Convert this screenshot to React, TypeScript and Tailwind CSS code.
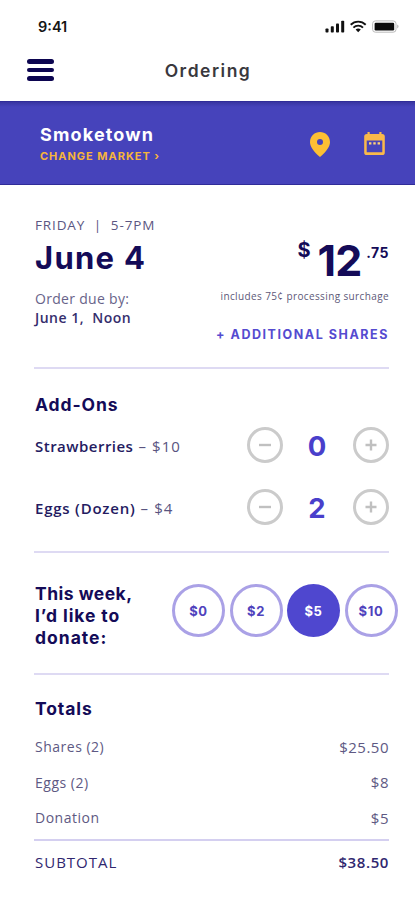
import React from "react";

const addOns = [
  { name: "Strawberries", price: "$10", count: 0, nameClass: "tracking-[0.48px]" },
  { name: "Eggs (Dozen)", price: "$4", count: 2, nameClass: "tracking-[0.78px]" },
];

const donations = ["$0", "$2", "$5", "$10"];

const totals = [
  { label: "Shares (2)", value: "$25.50" },
  { label: "Eggs (2)", value: "$8" },
  { label: "Donation", value: "$5" },
];

const StatusBar = () => (
  <div className="flex h-[54px] items-center justify-between pl-[38px] pr-[15px]">
    <span className="text-[14.5px] leading-none font-semibold text-[#151515]">9:41</span>
    <svg width="75" height="14" viewBox="0 0 75 14" fill="none">
      <g fill="#111">
        <rect x="0.5" y="8.5" width="3" height="4" rx="0.8" />
        <rect x="5.8" y="6.3" width="3" height="6.2" rx="0.8" />
        <rect x="11" y="3.5" width="3" height="9" rx="0.8" />
        <rect x="16.2" y="0.8" width="3" height="11.7" rx="0.8" />
      </g>
      <g stroke="#111" strokeWidth="1.9">
        <path d="M25.7 4.7c4.2-4.1 10.8-4.1 15 0" />
        <path d="M28.4 7.6c2.7-2.6 6.9-2.6 9.6 0" />
      </g>
      <path d="M30.6 9.6c1.6-1.4 3.6-1.4 5.2 0l-2.6 2.7z" fill="#111" />
      <rect x="47.6" y="0.9" width="23.4" height="11.3" rx="2.8" stroke="#bbb" />
      <rect x="49.6" y="2.8" width="19.6" height="7.6" rx="1.2" fill="#0a0a0a" />
      <path d="M72.3 4.6c1.6.7 1.6 3.2 0 3.9z" fill="#aaa" />
    </svg>
  </div>
);

const NavBar = () => (
  <div className="grid h-[32px] grid-cols-3 items-center px-[27px]">
    <button className="flex w-[27px] flex-col gap-[4px]">
      <span className="h-[4.4px] rounded-full bg-[#0c0550]" />
      <span className="h-[4.4px] rounded-full bg-[#0c0550]" />
      <span className="h-[4.4px] rounded-full bg-[#0c0550]" />
    </button>
    <h1 className="pt-px pl-px text-center text-[17.5px] leading-none font-semibold tracking-[1.5px] text-[#39383d]">
      Ordering
    </h1>
  </div>
);

const Market = () => (
  <div className="flex h-[84px] justify-between border-y border-[#302c98] bg-[#4643bb] bg-linear-to-b from-[#3935a2] to-[#4643bb] to-6% pr-[30px] pl-[40px]">
    <div className="pt-[22px]">
      <h2 className="h-[22px] text-[18px] leading-[22px] font-bold tracking-[1.15px] text-white">
        Smoketown
      </h2>
      <button className="block h-[20px] text-[11px] leading-[20px] font-bold tracking-[0.97px] whitespace-nowrap text-[#f6b53c]">
        CHANGE MARKET ›
      </button>
    </div>
    <div className="flex items-center gap-[34px] pt-[2px]">
      <svg width="20" height="25" viewBox="4 2 16 20">
        <path
          d="M12 2c-4.200 0-8 3.220-8 8.200 0 3.320 2.670 7.250 8 11.800 5.330-4.550 8-8.480 8-11.800C20 5.220 16.200 2 12 2zm0 5.500a2.400 2.400 0 1 1 0 4.800a2.400 2.400 0 0 1 0-4.800z"
          fill="#fdbf33"
          fillRule="evenodd"
        />
      </svg>
      <svg width="21" height="24" viewBox="0 0 21 24">
        <path
          d="M3.500 0h2.200v2h9.600V0h2.200v2h.7A2.600 2.600 0 0 1 20.800 4.600V20.400A2.600 2.600 0 0 1 18.200 23H2.800A2.600 2.600 0 0 1 .2 20.400V4.600A2.600 2.600 0 0 1 2.800 2h.7zM2.700 8.600v11.600h15.600V8.600z"
          fill="#fab94a"
          fillRule="evenodd"
        />
        <path d="M5 10.300h2.400v2.200H5zm4.300 0h2.400v2.200H9.300zm4.300 0H16v2.200h-2.400z" fill="#ffd277" />
      </svg>
    </div>
  </div>
);

const StepButton = ({ plus }: { plus?: boolean }) => (
  <button className="flex size-[36px] items-center justify-center rounded-full border-[3px] border-[#cbcbcb]">
    <svg width="12" height="12" viewBox="0 0 12 12" stroke="#c0c0c0" strokeWidth="2.4">
      <path d={plus ? "M.5 6h11M6 .5v11" : "M0 6h12"} />
    </svg>
  </button>
);

const App = () => {
  return (
    <div className="h-[900px] w-[415px] overflow-hidden bg-white font-['Inter',sans-serif] text-[#140b58]">
      <header className="h-[101px]">
        <StatusBar />
        <NavBar />
      </header>
      <Market />

      <main className="pr-[26px] pl-[34px]">
        <section className="flex h-[184px] justify-between border-b-2 border-[#dedaf3] pt-[30px] pl-px">
          <div className="font-['Open_Sans',sans-serif] whitespace-nowrap">
            <p className="h-[20px] text-[13.5px] leading-[20px] tracking-[0.86px] text-[#5b5682]">
              FRIDAY&nbsp; |&nbsp; 5-7PM
            </p>
            <h2 className="h-[44px] font-['Inter',sans-serif] text-[31px] leading-[45px] font-bold tracking-[1.3px]">
              June 4
            </h2>
            <p className="mt-[10px] h-[19px] text-[14px] leading-[19px] tracking-[0.3px] text-[#68638a]">
              Order due by:
            </p>
            <p className="h-[19px] text-[14px] leading-[19px] font-[550] tracking-[0.5px] text-[#352e6d]">
              June 1,&nbsp; Noon
            </p>
          </div>
          <div className="flex flex-col items-end whitespace-nowrap">
            <div className="mt-[20px] flex h-[50px] items-start font-bold">
              <span className="mt-[5px] text-[20px] leading-[20px]">$</span>
              <span className="ml-[7px] text-[43px] leading-[50px] tracking-[-1px]">12</span>
              <span className="mt-[8px] ml-[5px] text-[14px] leading-[20px] tracking-[0.5px]">.75</span>
            </div>
            <p className="mt-px h-[20px] font-['Open_Sans',sans-serif] text-[10px] leading-[20px] tracking-[0.38px] text-[#5d5878]">
              includes 75¢ processing surchage
            </p>
            <button className="mt-[19px] h-[20px] text-[12.5px] leading-[20px] font-bold tracking-[1.55px] text-[#554bd0]">
              + ADDITIONAL SHARES
            </button>
          </div>
        </section>

        <section className="h-[184px] border-b-2 border-[#dedaf3] pt-[24px] pl-px">
          <h3 className="h-[22px] text-[17.5px] leading-[23px] font-bold tracking-[0.9px]">Add-Ons</h3>
          <div className="mt-[12px] flex flex-col gap-[26px]">
            {addOns.map((item) => (
              <div key={item.name} className="flex h-[36px] items-center justify-between">
                <p className="pt-[2px] font-['Open_Sans',sans-serif] text-[15px] leading-[20px] tracking-[1.1px] whitespace-nowrap text-[#59547f]">
                  <span className={`font-semibold text-[#241b61] ${item.nameClass}`}>{item.name}</span> – {item.price}
                </p>
                <div className="flex w-[142px] items-center justify-between">
                  <StepButton />
                  <span className="pt-[4px] pr-[2px] text-[27.5px] leading-none font-bold text-[#493fcb]">
                    {item.count}
                  </span>
                  <StepButton plus />
                </div>
              </div>
            ))}
          </div>
        </section>

        <section className="flex h-[122px] justify-between border-b-2 border-[#dedaf3] pl-px">
          <h3 className="mt-[30px] text-[17.5px] leading-[22px] font-bold tracking-[0.48px] whitespace-nowrap">
            This week,
            <br />
            <span className="tracking-[0.9px]">I’d like to</span>
            <br />
            <span className="tracking-[1px]">donate:</span>
          </h3>
          <div className="mt-[31px] -mr-[8.5px] flex gap-[4.5px]">
            {donations.map((amount) => (
              <button
                key={amount}
                className={
                  amount === "$5"
                    ? "size-[53px] rounded-full bg-[#4f47cf] pt-[2px] text-[13px] font-bold tracking-[0.7px] text-white"
                    : "size-[53px] rounded-full border-[3px] border-[#aaa1e6] pt-[2px] text-[13px] font-bold tracking-[0.7px] text-[#4f43bd]"
                }
              >
                {amount}
              </button>
            ))}
          </div>
        </section>

        <section className="pt-[22px] font-['Open_Sans',sans-serif]">
          <h3 className="h-[22px] pl-px font-['Inter',sans-serif] text-[17.5px] leading-[23px] font-bold tracking-[0.9px]">
            Totals
          </h3>
          <div className="mt-[10px] border-b-2 border-[#d4cff0] pb-[3px] pl-px">
            {totals.map((row) => (
              <div
                key={row.label}
                className="flex h-[35.5px] items-center justify-between text-[14px] text-[#5e5983]"
              >
                <span className="tracking-[0.5px]">{row.label}</span>
                <span className="text-[15px] tracking-[0.5px]">{row.value}</span>
              </div>
            ))}
          </div>
          <div className="flex h-[44px] items-center justify-between pl-px text-[15px] font-medium text-[#30276f]">
            <span className="tracking-[1px]">SUBTOTAL</span>
            <span className="font-semibold tracking-[0.6px]">$38.50</span>
          </div>
        </section>
      </main>
    </div>
  );
};

export default App;
